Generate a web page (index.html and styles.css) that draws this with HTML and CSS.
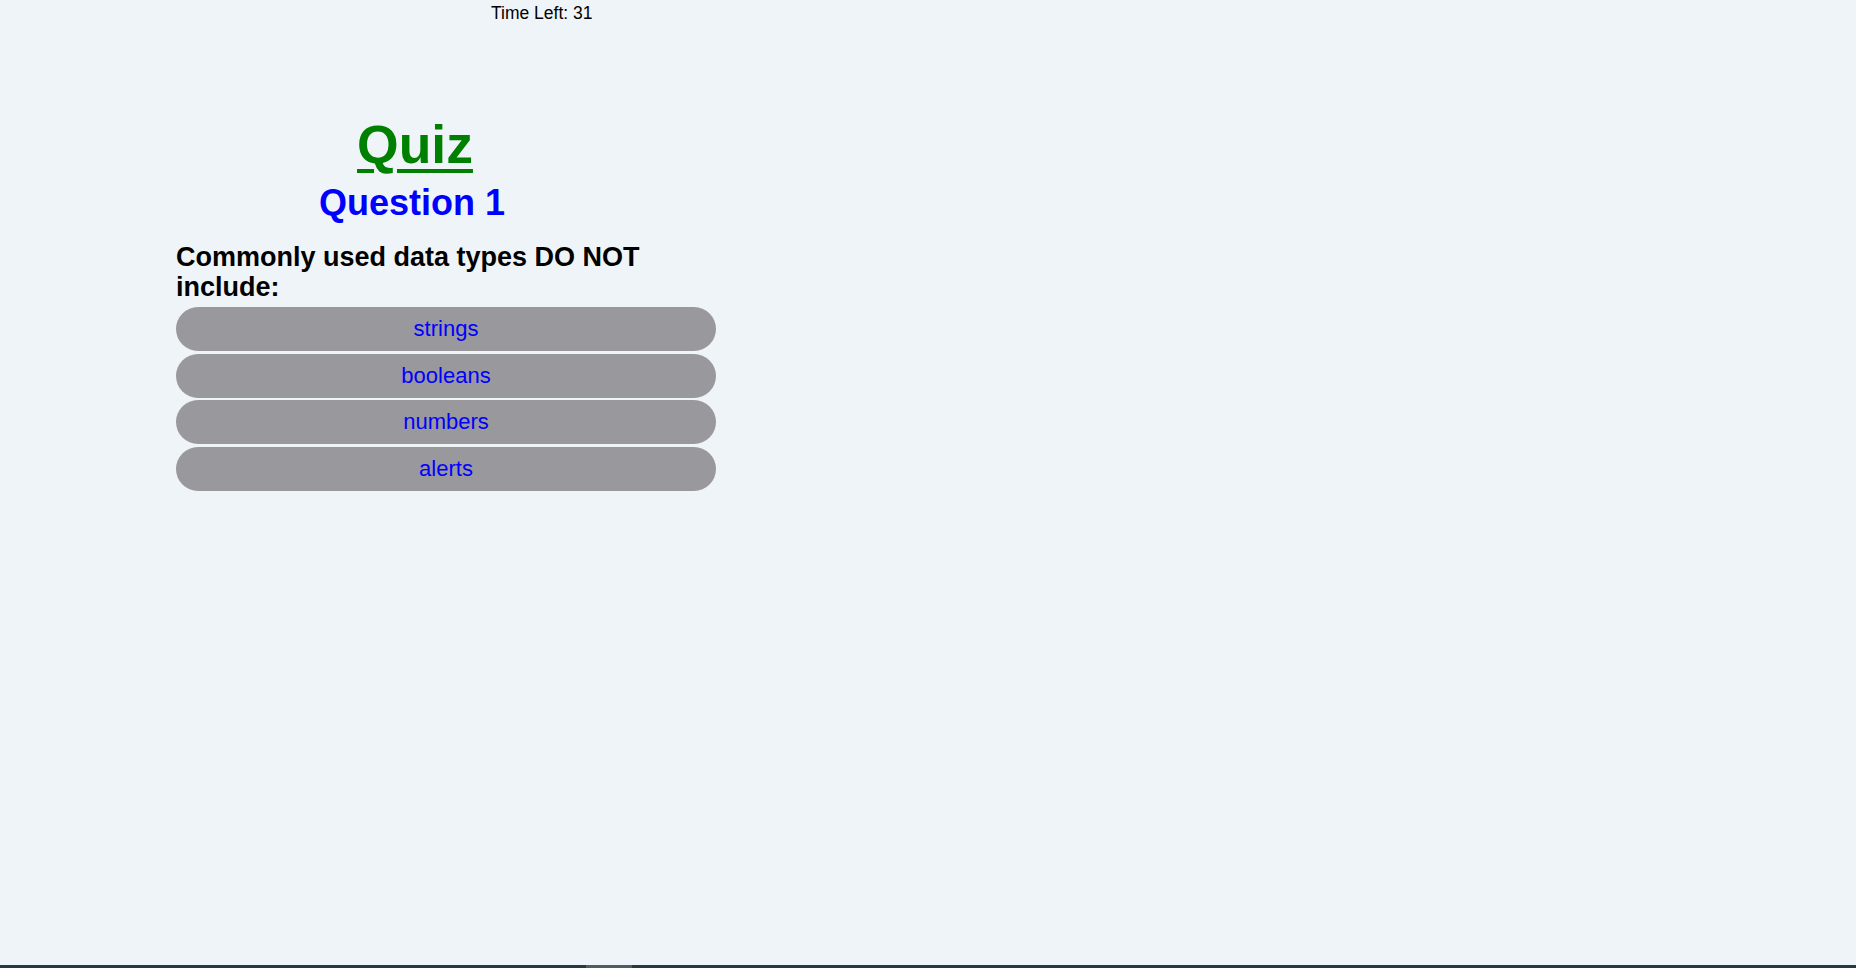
FILE: index.html
```html
<!DOCTYPE html>
<html lang="en">
<head>
<meta charset="utf-8">
<title>Quiz</title>
<link rel="stylesheet" href="styles.css">
</head>
<body>
<header class="timer">Time Left: 31</header>
<main class="quiz">
  <h1 class="title">Quiz</h1>
  <h2 class="qnum">Question 1</h2>
  <p class="question">Commonly used data types DO NOT include:</p>
  <div class="answers">
    <button class="answer">strings</button>
    <button class="answer">booleans</button>
    <button class="answer">numbers</button>
    <button class="answer">alerts</button>
  </div>
</main>
<div class="bottom-bar"><div class="bottom-thumb"></div></div>
</body>
</html>
```
FILE: styles.css
```css
html, body {
  margin: 0;
  padding: 0;
}
body {
  background: #eff4f8;
  font-family: "Liberation Sans", Arial, sans-serif;
  color: #000;
  min-height: 100vh;
  display: flex;
  flex-direction: column;
}
.timer {
  padding: 3px 0 0 491px;
  font-size: 17.5px;
  line-height: 20px;
}
.quiz {
  margin-left: 176px;
  width: 540px;
  display: flex;
  flex-direction: column;
}
.title {
  margin: 91px 0 0 0;
  width: 478px;
  text-align: center;
  font-size: 53.5px;
  line-height: 62px;
  font-weight: bold;
  color: #008000;
  text-decoration: underline;
  text-decoration-thickness: 4px;
  text-underline-offset: 6px;
}
.qnum {
  margin: 7px 0 0 0;
  width: 472px;
  text-align: center;
  font-size: 36px;
  line-height: 40px;
  font-weight: bold;
  color: #0000ff;
}
.question {
  margin: 19px 0 0 0;
  font-size: 27px;
  line-height: 30px;
  font-weight: bold;
}
.answers {
  margin-top: 5px;
  display: flex;
  flex-direction: column;
  gap: 2.7px;
}
.answer {
  display: block;
  width: 540px;
  height: 44px;
  border: none;
  border-radius: 22px;
  background: #99989d;
  color: #0000ff;
  font-family: "Liberation Sans", Arial, sans-serif;
  font-size: 22px;
  padding: 0;
  text-align: center;
  cursor: pointer;
}
.bottom-bar {
  margin-top: auto;
  height: 3px;
  background: #253a41;
  display: flex;
}
.bottom-thumb {
  margin-left: 586px;
  width: 46px;
  background: #4f5d62;
}
```
